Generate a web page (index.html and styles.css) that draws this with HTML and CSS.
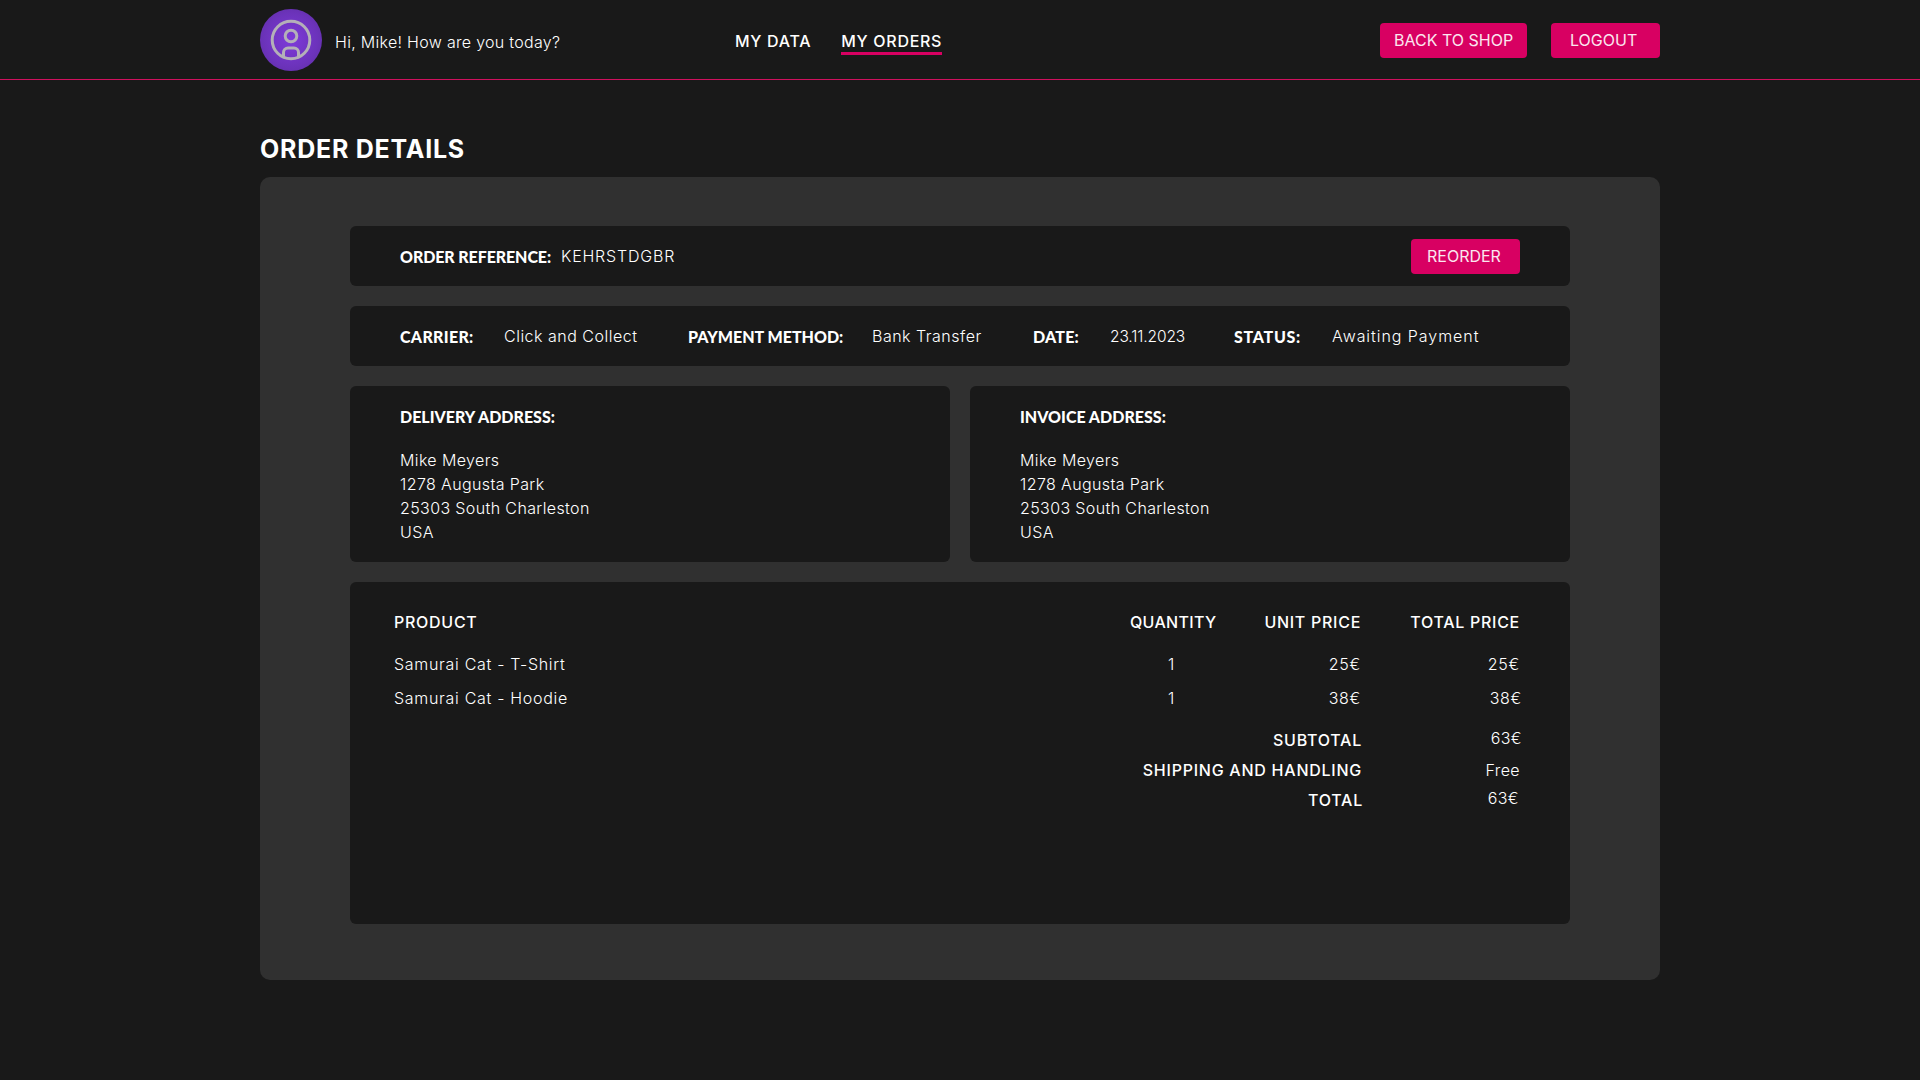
FILE: index.html
```html
<!DOCTYPE html>
<html lang="en">
<head>
<meta charset="utf-8">
<title>Order details</title>
<link rel="stylesheet" href="styles.css">
</head>
<body>
<header class="topbar">
  <div class="wrap topbar-inner">
    <div class="user">
      <div class="avatar">
        <svg viewBox="0 0 62 62" width="62" height="62" fill="none" stroke="#b4b0b8" stroke-width="3">
          <circle cx="31" cy="31" r="18.8"/>
          <circle cx="31" cy="27" r="5.8"/>
          <path d="M23.5 48.2V43.5a4.5 4.5 0 0 1 4.5-4.5h6a4.5 4.5 0 0 1 4.5 4.5v4.7"/>
        </svg>
      </div>
      <span class="greeting">Hi, Mike! How are you today?</span>
    </div>
    <nav class="nav">
      <a class="nav-link">MY DATA</a>
      <a class="nav-link active">MY ORDERS</a>
    </nav>
    <div class="actions">
      <a class="btn btn-shop">BACK TO SHOP</a>
      <a class="btn btn-logout">LOGOUT</a>
    </div>
  </div>
</header>
<main class="wrap">
  <h1 class="title">ORDER DETAILS</h1>
  <section class="card">
    <div class="panel row ref-row">
      <div class="ref"><b>ORDER REFERENCE:</b><span class="ref-value">KEHRSTDGBR</span></div>
      <a class="btn btn-reorder">REORDER</a>
    </div>
    <div class="panel row info-row">
      <b class="k k1">CARRIER:</b><span class="v v1">Click and Collect</span>
      <b class="k k2">PAYMENT METHOD:</b><span class="v v2">Bank Transfer</span>
      <b class="k k3">DATE:</b><span class="v v3">23.11.2023</span>
      <b class="k k4">STATUS:</b><span class="v v4">Awaiting Payment</span>
    </div>
    <div class="addresses">
      <div class="panel address">
        <b class="address-title">DELIVERY ADDRESS:</b>
        <p class="address-lines">Mike Meyers<br>1278 Augusta Park<br>25303 South Charleston<br>USA</p>
      </div>
      <div class="panel address">
        <b class="address-title">INVOICE ADDRESS:</b>
        <p class="address-lines">Mike Meyers<br>1278 Augusta Park<br>25303 South Charleston<br>USA</p>
      </div>
    </div>
    <div class="panel products">
      <div class="grid head">
        <span>PRODUCT</span><span class="qty-h">QUANTITY</span><span class="r">UNIT PRICE</span><span class="r">TOTAL PRICE</span>
      </div>
      <div class="grid line">
        <span>Samurai Cat - T-Shirt</span><span class="qty">1</span><span class="r">25€</span><span class="r">25€</span>
      </div>
      <div class="grid line">
        <span>Samurai Cat - Hoodie</span><span class="qty">1</span><span class="r">38€</span><span class="r nudge">38€</span>
      </div>
      <div class="sum sum-sub"><span class="sum-label">SUBTOTAL</span><span class="sum-value nudge up">63€</span></div>
      <div class="sum sum-ship"><span class="sum-label">SHIPPING AND HANDLING</span><span class="sum-value">Free</span></div>
      <div class="sum sum-total"><span class="sum-label sum-label-total">TOTAL</span><span class="sum-value up back">63€</span></div>
    </div>
  </section>
</main>
</body>
</html>
```
FILE: styles.css
```css
* { box-sizing: border-box; }
html, body { margin: 0; padding: 0; }
body {
  background: #191919;
  color: #fff;
  font-family: "Inter", "Liberation Sans", sans-serif;
  height: 1080px;
  overflow: hidden;
}
.wrap { width: 1400px; margin: 0 auto; }
.topbar { height: 80px; border-bottom: 1px solid #d0105e; }
.topbar-inner { display: flex; align-items: center; height: 79px; padding-top: 1px; }
.user { display: flex; align-items: center; width: 475px; }
.avatar {
  width: 62px; height: 62px; border-radius: 50%;
  background: radial-gradient(circle, #7e3ada 0%, #6c33bb 60%, #5c2ca0 100%);
  margin-right: 13px; flex: none;
}
.avatar svg { display: block; }
.greeting { font-size: 16px; font-weight: 350; letter-spacing: .3px; color: #fff; position: relative; top: 2px; }
.nav { display: flex; gap: 30px; font-weight: 500; font-size: 16px; letter-spacing: .7px; position: relative; top: 3px; }
.nav-link { display: block; padding-bottom: 1px; border-bottom: 3px solid transparent; }
.nav-link.active { border-bottom-color: #d80062; }
.actions { margin-left: auto; display: flex; gap: 24px; }
.btn {
  display: flex; align-items: center; background: #d80062; color: #fbe6ef;
  border-radius: 4px; height: 35px; font-size: 16px;
}
.btn-shop { width: 147px; padding-left: 14px; }
.btn-logout { width: 109px; padding-left: 19px; }
.title { font-size: 25px; font-weight: 700; letter-spacing: .75px; margin: 54px 0 0; height: 43px; line-height: 30px; }
.card { background: #303030; border-radius: 10px; height: 803px; padding: 49px 90px 0; display: flex; flex-direction: column; gap: 20px; }
.panel { background: #191919; border-radius: 6px; }
.row { height: 60px; display: flex; align-items: center; padding: 0 50px; font-size: 16px; }
.row b, .address-title { font-family: "Lato", sans-serif; font-weight: 900; font-size: 16px; }
.row span { font-weight: 350; font-size: 16px; letter-spacing: .5px; color: #fff; }
.ref-row { justify-content: space-between; }
.ref { display: flex; align-items: center; }
.ref b { letter-spacing: -.1px; }
.ref .ref-value { margin-left: 10px; letter-spacing: .8px; }
.btn-reorder { width: 109px; padding-left: 16px; }
.k { flex: none; }
.k1 { width: 104px; letter-spacing: .3px; }
.v1 { width: 184px; }
.k2 { width: 184px; }
.v2 { width: 161px; }
.k3 { width: 77px; letter-spacing: .2px; }
.row .v3 { width: 124px; font-size: 15.5px; letter-spacing: -.1px; }
.k4 { width: 98px; letter-spacing: .7px; }
.row .v4 { letter-spacing: .95px; }
.addresses { display: grid; grid-template-columns: 600px 600px; gap: 20px; }
.address { height: 176px; padding: 19px 50px 0; }
.address-title { display: block; line-height: 24px; }
.address-lines { margin: 19px 0 0; font-size: 16px; font-weight: 350; letter-spacing: .38px; line-height: 24px; color: #fff; }
.products { height: 342px; padding: 28px 50px 0 44px; font-size: 16px; }
.grid { display: grid; grid-template-columns: 736px 100px 131px 1fr; align-items: center; }
.head { font-weight: 500; height: 24px; font-size: 16px; letter-spacing: .72px; white-space: nowrap; }
.line { height: 34px; font-size: 16px; font-weight: 350; letter-spacing: .7px; color: #fff; }
.head + .line { margin-top: 13px; }
.r { text-align: right; }
.qty-h { letter-spacing: .3px; }
.qty { padding-left: 38px; }
.nudge { position: relative; left: 2px; }
.up { position: relative; top: -2px; }
.up.back { left: -1px; }
.sum { display: grid; grid-template-columns: 968px 1fr; align-items: center; height: 30px; }
.sum-sub { margin-top: 10px; }
.sum-label { text-align: right; font-weight: 500; letter-spacing: .75px; }
.sum-label-total { position: relative; left: 1px; }
.sum-value { text-align: right; font-size: 16px; font-weight: 350; letter-spacing: .4px; color: #fff; }
```
